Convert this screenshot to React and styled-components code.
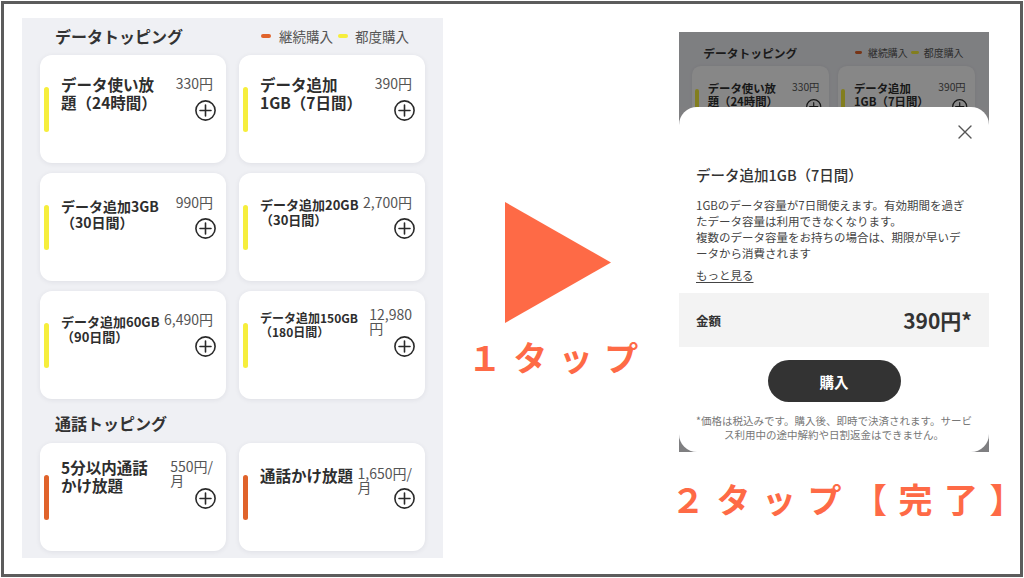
import styled, { createGlobalStyle } from "styled-components"

const GlobalStyle = createGlobalStyle`
  html, body {
    margin: 0;
    padding: 0;
    background: #fff;
  }
  body {
    font-family: "Noto Sans CJK JP", "Noto Sans", sans-serif;
    color: #333;
  }
`;

const Frame = styled.div`
    box-sizing: border-box;
    width: 1022px;
    height: 576px;
    margin: 1px;
    border: 3px solid #5c5c5c;
    padding: 14px 0 0 18px;
    display: flex;
`;

/* ---------- topping list ---------- */

const Panel = styled.div`
    box-sizing: border-box;
    width: 421px;
    flex-shrink: 0;
    align-self: flex-start;
    background: #eff0f4;
    padding: 6px 18px 7px;
`;
const SectionHead = styled.div`
    height: 24px;
    display: flex;
    align-items: center;
    justify-content: space-between;
    padding: 0 16px 0 15px;
    margin: ${p => p.$first ? "0 0 7px" : "12px 0 8px"};
`;
const SectionTitle = styled.span`
    font-size: 16px;
    font-weight: 700;
    color: #333;
`;
const Legend = styled.div`
    display: flex;
    align-items: center;
    font-size: 13.5px;
    color: #555;
`;
const LegendDash = styled.span`
    width: 10px;
    height: 4px;
    border-radius: 2px;
    background: ${p => p.$color};
    margin: ${p => p.$first ? "0 8px 0 0" : "0 7px 0 5px"};
`;
const CardGrid = styled.div`
    display: grid;
    grid-template-columns: 186px 186px;
    column-gap: 13px;
    row-gap: 10px;
`;
const Card = styled.div`
    box-sizing: border-box;
    height: 108px;
    background: #fff;
    border-radius: 12px;
    box-shadow: 0 1px 5px rgba(40, 44, 60, 0.08);
    display: flex;
    align-items: center;
    padding: 0 10px 0 4px;
`;
const Bar = styled.span`
    width: 5px;
    height: 45px;
    border-radius: 3px;
    flex-shrink: 0;
    background: ${p => p.$call ? "#e0632b" : "#f6ee3c"};
`;
const CardBody = styled.div`
    flex: 1;
    align-self: stretch;
    margin-left: 12px;
    display: flex;
    flex-direction: column;
`;
const CardHead = styled.div`
    box-sizing: border-box;
    height: 45px;
    padding-top: ${p => p.$top}px;
    display: flex;
    justify-content: space-between;
    align-items: flex-start;
`;
const CardTitle = styled.div`
    font-size: ${p => p.$size}px;
    font-weight: 700;
    line-height: 1.15;
    color: #2e2e2e;
    white-space: nowrap;
    margin-top: ${p => p.$dy || 0}px;
`;
const Price = styled.div`
    font-size: 14px;
    line-height: 14px;
    color: #555;
    white-space: nowrap;
    margin-right: 3px;
`;
const AddButton = styled.span`
    align-self: flex-end;
    display: flex;
    width: 21px;
    height: 21px;
`;

const PlusIcon = () => (
    <svg width="21" height="21" viewBox="0 0 21 21" fill="none" stroke="#2a2a2a" strokeWidth="1.6" strokeLinecap="round">
        <circle cx="10.5" cy="10.5" r="9.6" />
        <path d="M10.5 5v11M5 10.5h11" />
    </svg>
);

const dataCards = [
    { lines: ["データ使い放", "題（24時間）"], price: ["330円"], size: 15.5, top: 21 },
    { lines: ["データ追加", "1GB（7日間）"], price: ["390円"], size: 15.5, top: 21 },
    { lines: ["データ追加3GB", "（30日間）"], price: ["990円"], size: 14, top: 22, dy: 3 },
    { lines: ["データ追加20GB", "（30日間）"], price: ["2,700円"], size: 13, top: 22, dy: 3 },
    { lines: ["データ追加60GB", "（90日間）"], price: ["6,490円"], size: 13, top: 21, dy: 3 },
    { lines: ["データ追加150GB", "（180日間）"], price: ["12,980", "円"], size: 12, top: 16, dy: 4 },
];
const callCards = [
    { lines: ["5分以内通話", "かけ放題"], price: ["550円/", "月"], size: 15.5, top: 16, call: true },
    { lines: ["通話かけ放題"], price: ["1,650円/", "月"], size: 15.5, top: 23, dy: 1, call: true },
];

const withBreaks = (lines) => lines.map((l, i) => (
    <span key={i}>{i > 0 && <br />}{l}</span>
));

const ToppingCard = ({ card }) => (
    <Card>
        <Bar $call={card.call} />
        <CardBody>
            <CardHead $top={card.top}>
                <CardTitle $size={card.size} $dy={card.dy}>{withBreaks(card.lines)}</CardTitle>
                <Price>{withBreaks(card.price)}</Price>
            </CardHead>
            <AddButton><PlusIcon /></AddButton>
        </CardBody>
    </Card>
);

// "peek" renders only what shows above the bottom sheet
const ToppingPanel = ({ className, peek }) => (
    <Panel className={className}>
        <SectionHead $first>
            <SectionTitle>データトッピング</SectionTitle>
            <Legend>
                <LegendDash $first $color="#e0632b" />継続購入
                <LegendDash $color="#f6ee3c" />都度購入
            </Legend>
        </SectionHead>
        <CardGrid>
            {(peek ? dataCards.slice(0, 2) : dataCards).map((c, i) => <ToppingCard key={i} card={c} />)}
        </CardGrid>
        {!peek && (
            <>
                <SectionHead>
                    <SectionTitle>通話トッピング</SectionTitle>
                </SectionHead>
                <CardGrid>
                    {callCards.map((c, i) => <ToppingCard key={i} card={c} />)}
                </CardGrid>
            </>
        )}
    </Panel>
);

/* ---------- arrow column ---------- */

const Middle = styled.div`
    width: 236px;
    flex-shrink: 0;
    display: flex;
    flex-direction: column;
    align-items: center;
    padding-top: 184px;
`;
const Arrow = styled.svg`
    margin-right: 6px;
`;
const StepLabel = styled.div`
    font-size: 34px;
    font-weight: 700;
    line-height: 40px;
    letter-spacing: 11.5px;
    color: #fe6a46;
    white-space: nowrap;
    margin: ${p => p.$done ? "27px 0 0 -8px" : "14px 16px 0 0"};
`;
const LastChar = styled.span`
    letter-spacing: 0;
`;

/* ---------- phone with sheet ---------- */

const Right = styled.div`
    width: 310px;
    flex-shrink: 0;
    display: flex;
    flex-direction: column;
    align-items: flex-start;
    padding-top: 14px;
`;
const Phone = styled.div`
    width: 310px;
    height: 420px;
    display: flex;
    flex-direction: column;
    background: #7f7f81;
`;
const Backdrop = styled.div`
    position: relative;
    box-sizing: border-box;
    height: 75px;
    flex-shrink: 0;
    overflow: hidden;
    background: #eff0f4;
    padding-top: 7px;
`;
const MiniPanel = styled(ToppingPanel)`
    zoom: 0.735;
`;
const Dim = styled.div`
    position: absolute;
    inset: 0;
    background: rgba(0, 0, 0, 0.47);
`;
const Sheet = styled.div`
    flex: 1;
    background: #fff;
    border-radius: 18px;
`;
const CloseRow = styled.div`
    height: 50px;
    display: flex;
    align-items: center;
    justify-content: flex-end;
    padding: 0 17px;
`;
const SheetTitle = styled.div`
    margin-top: 8px;
    padding: 0 17px;
    font-size: 14.5px;
    line-height: 20px;
    font-weight: 500;
    color: #333;
`;
const Desc = styled.p`
    margin: 12px 0 0;
    padding: 0 17px;
    font-size: 11.5px;
    line-height: 16px;
    color: #444;
    white-space: nowrap;
`;
const MoreLink = styled.div`
    margin: 6px 17px 0;
    font-size: 11.5px;
    line-height: 16px;
    color: #444;
    text-decoration: underline;
    text-underline-offset: 2px;
`;
const PriceRow = styled.div`
    margin-top: 10px;
    height: 54px;
    background: #f3f3f3;
    padding: 0 17px;
    display: flex;
    align-items: center;
    justify-content: space-between;
`;
const PriceLabel = styled.span`
    font-size: 12.5px;
    font-weight: 700;
    color: #333;
`;
const PriceValue = styled.span`
    font-size: 21px;
    font-weight: 700;
    color: #333;
`;
const BuyButton = styled.button`
    display: block;
    margin: 13px auto 0;
    width: 133px;
    height: 42px;
    border: none;
    border-radius: 21px;
    background: #333;
    color: #fff;
    font-family: inherit;
    font-size: 14.5px;
    font-weight: 700;
`;
const Note = styled.p`
    margin: 12px 0 0;
    font-size: 10.5px;
    line-height: 14px;
    color: #777;
    text-align: center;
    white-space: nowrap;
`;

const CloseIcon = () => (
    <svg width="14" height="14" viewBox="0 0 14 14" stroke="#555" strokeWidth="1.4" strokeLinecap="round">
        <path d="M1 1l12 12M13 1L1 13" />
    </svg>
);

const App = () => {
    return (
        <>
            <GlobalStyle />
            <Frame>
                <ToppingPanel />
                <Middle>
                    <Arrow width="106" height="121" viewBox="0 0 106 121">
                        <polygon points="0,0 106,60.5 0,121" fill="#fe6a46" />
                    </Arrow>
                    <StepLabel>１タッ<LastChar>プ</LastChar></StepLabel>
                </Middle>
                <Right>
                    <Phone>
                        <Backdrop>
                            <MiniPanel peek />
                            <Dim />
                        </Backdrop>
                        <Sheet>
                            <CloseRow><CloseIcon /></CloseRow>
                            <SheetTitle>データ追加1GB（7日間）</SheetTitle>
                            <Desc>
                                1GBのデータ容量が7日間使えます。有効期間を過ぎ<br />
                                たデータ容量は利用できなくなります。<br />
                                複数のデータ容量をお持ちの場合は、期限が早いデ<br />
                                ータから消費されます
                            </Desc>
                            <MoreLink>もっと見る</MoreLink>
                            <PriceRow>
                                <PriceLabel>金額</PriceLabel>
                                <PriceValue>390円*</PriceValue>
                            </PriceRow>
                            <BuyButton>購入</BuyButton>
                            <Note>
                                *価格は税込みです。購入後、即時で決済されます。サービ<br />
                                ス利用中の途中解約や日割返金はできません。
                            </Note>
                        </Sheet>
                    </Phone>
                    <StepLabel $done>２タップ【完了<LastChar>】</LastChar></StepLabel>
                </Right>
            </Frame>
        </>
    )
}
export default App;
